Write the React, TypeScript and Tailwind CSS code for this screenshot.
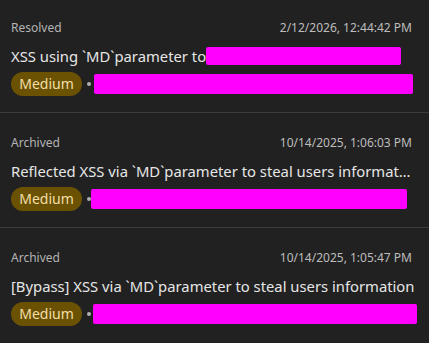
const items = [
  {
    status: "Resolved",
    date: "2/12/2026, 12:44:42 PM",
    title: "XSS using `MD`parameter to",
    titleBox: "w-[195px]",
    titleGap: "mr-[9px]",
    box: "ml-[3px] w-[319px]",
  },
  {
    status: "Archived",
    date: "10/14/2025, 1:06:03 PM",
    title: "Reflected XSS via `MD`parameter to steal users information",
    titleBox: "",
    titleGap: "mr-[9px]",
    box: "ml-0 w-[316px]",
  },
  {
    status: "Archived",
    date: "10/14/2025, 1:05:47 PM",
    title: "[Bypass] XSS via `MD`parameter to steal users information",
    titleBox: "",
    titleGap: "mr-0",
    box: "ml-[2px] w-[324px]",
  },
];

export default function App() {
  return (
    <div className="h-[343px] w-[429px] overflow-hidden bg-[#212121] font-['Noto_Sans',sans-serif]">
      <div className="-mt-[2px]">
        {items.map((item, i) => (
          <div
            key={i}
            className={
              i < items.length - 1
                ? "border-b border-[#3c3c3c] pb-4 pl-[11px] pr-[8px] pt-[22px]"
                : "pb-4 pl-[11px] pr-[8px] pt-[22px]"
            }
          >
            <div className="flex h-4 items-center justify-between text-xs">
              <span className="text-[#b4b4b4]">{item.status}</span>
              <span className="pr-[9px] text-[12px] text-[#bdbdbd]">{item.date}</span>
            </div>
            <div className={`mt-[9px] flex h-[22px] items-center text-[14.8px] text-[#e6e6e6] ${item.titleGap}`}>
              <span className="truncate leading-[22px]">{item.title}</span>
              {item.titleBox && (
                <span className={`h-[18px] shrink-0 rounded-[2px] bg-[#ff00ff] ${item.titleBox}`} />
              )}
            </div>
            <div className="mt-[5px] flex h-6 items-center">
              <span className="flex h-6 w-[71px] items-center justify-center rounded-full bg-[#6b5203] text-sm text-[#f2dfa8]">
                Medium
              </span>
              <span className="ml-[5px] h-[4px] w-[4px] rounded-full bg-[#b0b0b0]" />
              <span className={`h-[20px] rounded-[2px] bg-[#ff00ff] ${item.box}`} />
            </div>
          </div>
        ))}
      </div>
    </div>
  );
}
